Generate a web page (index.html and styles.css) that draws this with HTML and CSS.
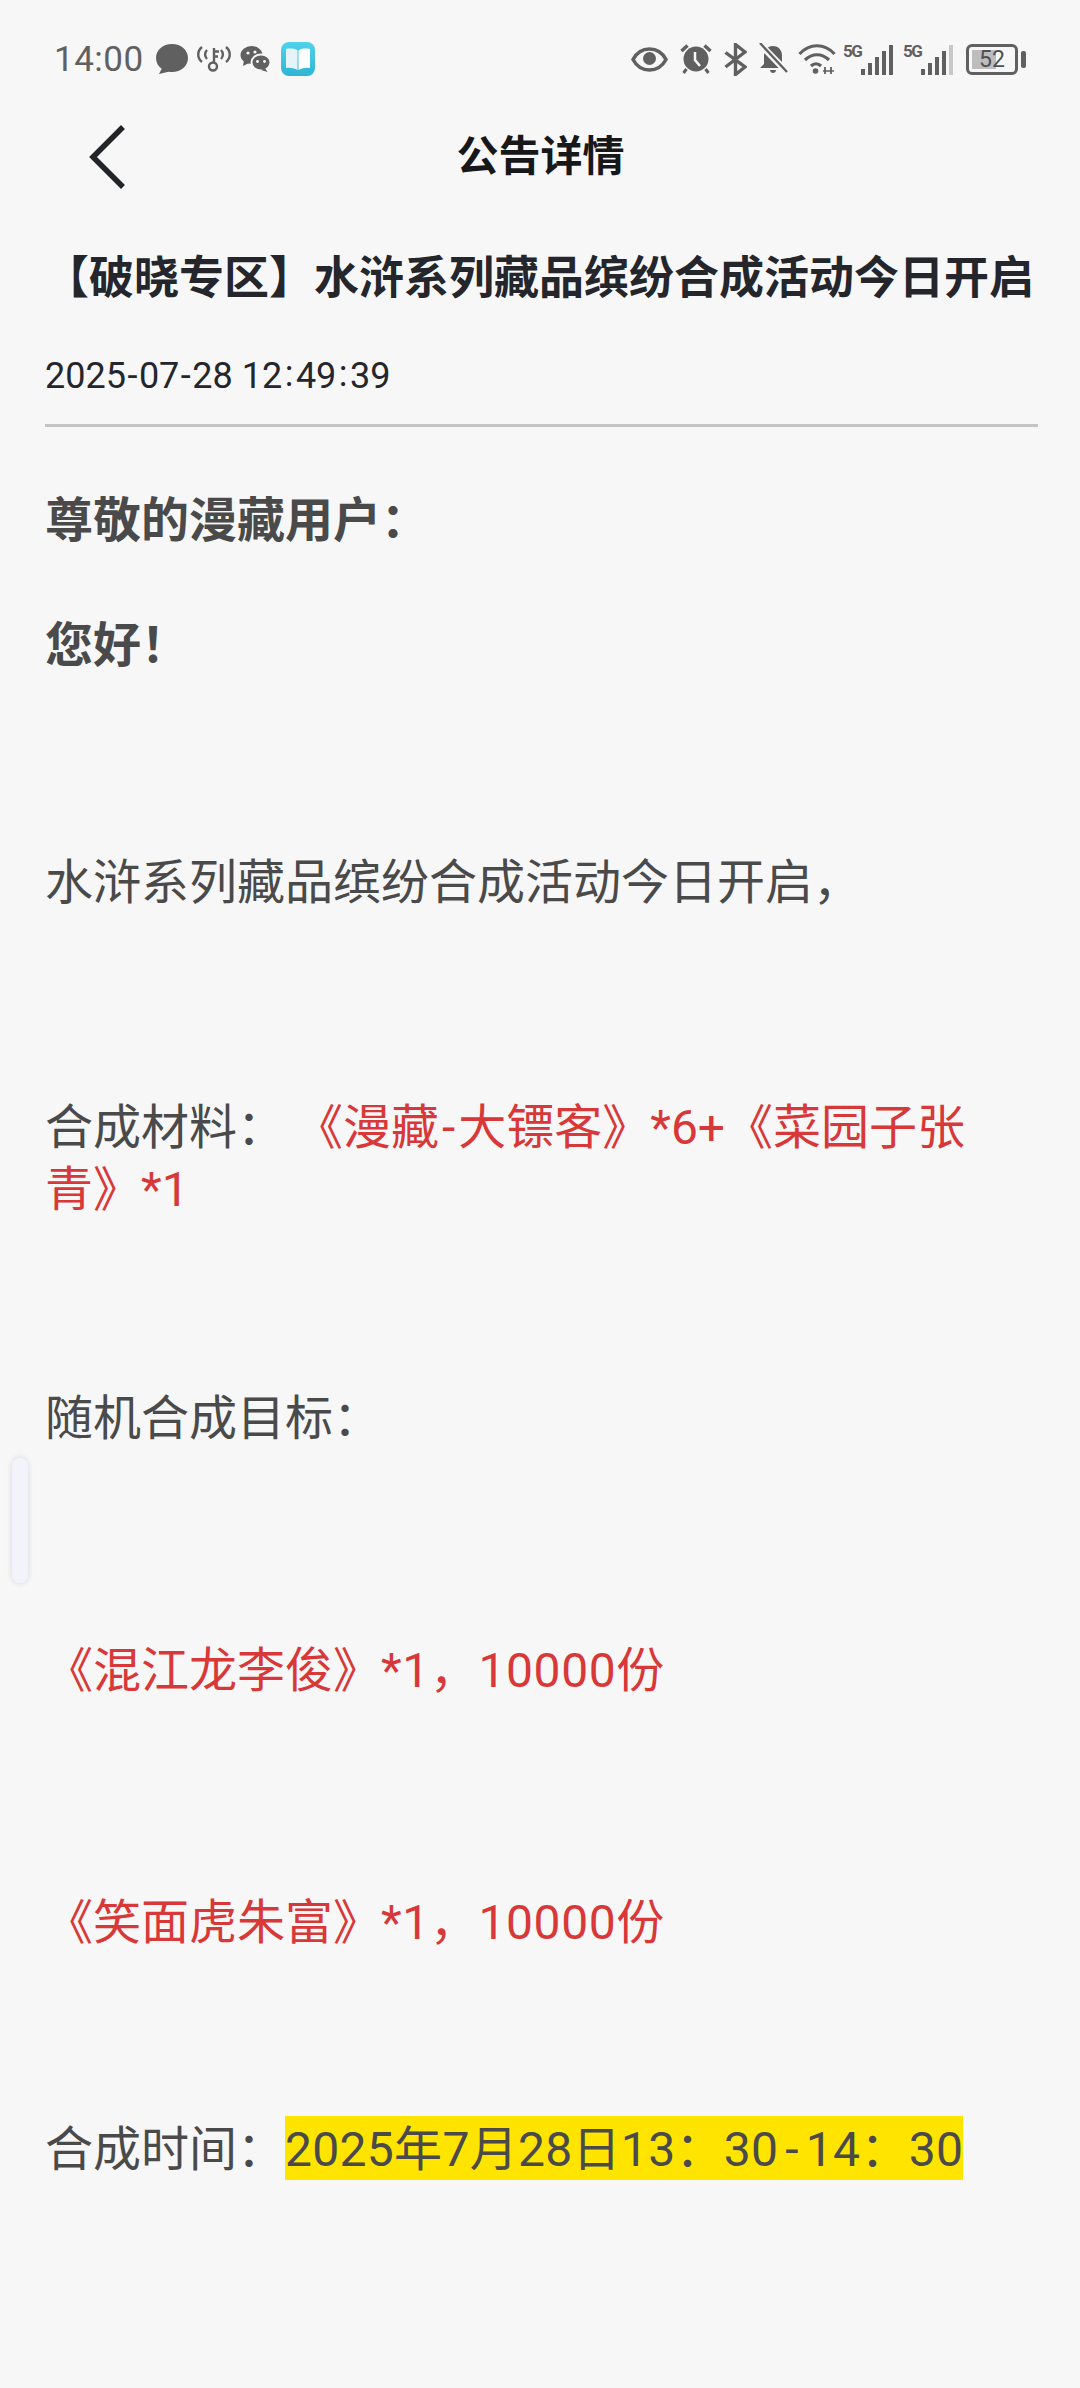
FILE: index.html
```html
<!DOCTYPE html>
<html lang="zh-CN">
<head>
    <meta charset="UTF-8">
    <meta name="viewport" content="width=device-width, initial-scale=1.0">
    <title>公告详情</title>
    <link rel="stylesheet" href="styles.css">
</head>
<body>
    <div class="statusbar">
        <div class="status-left">
            <span class="clock">14:00</span>
            <svg class="ico ml-12" width="32" height="30" viewBox="0 0 32 30"><path d="M16 0C7 0 0 6 0 14c0 4.500 2.200 8.300 5.700 10.800L3 30l9.500-2.300c1.100.2 2.300.3 3.500.3 9 0 16-6 16-14S25 0 16 0z" fill="#606060"/></svg>
            <svg class="ico ml-9" width="34" height="26" viewBox="0 0 34 26" fill="none" stroke="#606060" stroke-width="2.400"><path d="M5 1C0 5 0 12 5 16M10 4c-2.500 2.500-2.500 6.500 0 9M29 1c5 4 5 11 0 15M24 4c2.500 2.500 2.500 6.500 0 9"/><circle cx="16" cy="20.500" r="4"/><path d="M17 16.500V2M17 5.500h5M17 10.500h4"/></svg>
            <svg class="ico ml-9" width="31" height="26" viewBox="0 0 31 26"><ellipse cx="11.500" cy="9" rx="11" ry="9" fill="#606060"/><path d="M4 14l-1 6 6-3z" fill="#606060"/><ellipse cx="21" cy="16.500" rx="9.500" ry="8" fill="#606060" stroke="#f7f7f8" stroke-width="2"/><path d="M25 22l2.500 4-6.500-2z" fill="#606060"/><circle cx="8" cy="7" r="1.600" fill="#f7f7f8"/><circle cx="15" cy="6" r="1.600" fill="#f7f7f8"/><circle cx="17.500" cy="15.500" r="1.400" fill="#f7f7f8"/><circle cx="24.500" cy="15.500" r="1.400" fill="#f7f7f8"/></svg>
            <svg class="ico ml-10" width="34" height="34" viewBox="0 0 34 34"><defs><linearGradient id="bookbg" x1="0" y1="0" x2="0" y2="1"><stop offset="0" stop-color="#4fd3ec"/><stop offset="1" stop-color="#2fb4d6"/></linearGradient></defs><rect width="34" height="34" rx="8" fill="url(#bookbg)"/><path d="M5 7c5-1 9-.5 11.500 1.500V28C13 26 9 25.500 5 26z" fill="#e6f4fa"/><path d="M29 7c-5-1-9-.5-11.500 1.500V28C21 26 25 25.500 29 26z" fill="#ffffff"/></svg>
        </div>
        <div class="status-right">
            <svg class="ico" width="37" height="25" viewBox="0 0 37 25"><path d="M2 12.500C6 5 12 2 18.500 2S31 5 35 12.500C31 20 25 23 18.500 23S6 20 2 12.500z" fill="none" stroke="#606060" stroke-width="3.500"/><circle cx="18.500" cy="11.500" r="6.500" fill="#606060"/></svg>
            <svg class="ico ml-12" width="32" height="30" viewBox="0 0 31 30"><circle cx="15.500" cy="15" r="12.500" fill="#606060"/><path d="M14.500 8v8l5 6" fill="none" stroke="#f7f7f8" stroke-width="2.500"/><path d="M1 7l6-5.500M30 7l-6-5.500" stroke="#606060" stroke-width="3.500" fill="none"/><path d="M6 25l-3 4M25 25l3 4" stroke="#606060" stroke-width="3" fill="none"/></svg>
            <svg class="ico ml-12" width="23" height="33" viewBox="0 0 23 33"><path d="M1.500 9.500L21 24l-9.500 7.500v-30L21 9 1.500 24" fill="none" stroke="#606060" stroke-width="3.400"/></svg>
            <svg class="ico ml-12" width="29" height="32" viewBox="0 0 29 32"><path d="M14 3c6 0 9 4.500 9 10v8l4 4H1l4-4v-8C5 7.500 8 3 14 3zM11 27h6c0 4-6 4-6 0z" fill="#606060"/><path d="M0 0l28 29" stroke="#f7f7f8" stroke-width="6.500"/><path d="M1 0l27 29" stroke="#606060" stroke-width="2.400"/></svg>
            <svg class="ico ml-10" width="38" height="32" viewBox="0 0 38 32" fill="none" stroke="#606060" stroke-width="3.200"><path d="M1.500 11c10-11 25-11 35 0M7 17c7-7 17-7 24 0M13 23c3-3 7-3 10 0"/><circle cx="17.500" cy="28" r="2.800" fill="#606060" stroke="none"/><path d="M27 24v7M33 24v7" stroke-width="1.800"/><path d="M25 28h11" stroke-width="1.500"/></svg>
            <div class="signal ml-7">
                <span class="net">5G</span>
                <div class="bars"><i class="b1"></i><i class="b2"></i><i class="b3"></i><i class="b4"></i><i class="b5"></i></div>
            </div>
            <div class="signal ml-10">
                <span class="net">5G</span>
                <div class="bars"><i class="b1"></i><i class="b2"></i><i class="b3"></i><i class="b4"></i><i class="b5 weak"></i></div>
            </div>
            <div class="battery ml-13">
                <div class="battery-body"><div class="battery-fill"></div><span class="battery-num">52</span></div>
                <div class="battery-cap"></div>
            </div>
        </div>
    </div>

    <div class="navbar">
        <svg class="back" width="40" height="66" viewBox="0 0 40 66"><path d="M35 3L5 33l30 30" fill="none" stroke="#222428" stroke-width="5.500"/></svg>
        <h1 class="nav-title">公告详情</h1>
    </div>

    <div class="head">
        <h2 class="title">【破晓专区】水浒系列藏品缤纷合成活动今日开启</h2>
        <div class="date">2025<span class="hyphen">-</span>07<span class="hyphen">-</span>28 12<span class="colon">:</span>49<span class="colon">:</span>39</div>
    </div>

    <div class="content">
        <p class="bold">尊敬的漫藏用户：</p>
        <p class="bold gap-1">您好！</p>
        <p class="gap-2">水浒系列藏品缤纷合成活动今日开启，</p>
        <p class="gap-3">合成材料： <span class="red pull">《漫藏<span class="dash">-</span>大镖客》*6+《菜园子张</span><br><span class="red">青》*1</span></p>
        <p class="gap-4">随机合成目标：</p>
        <p class="gap-5 red">《混江龙李俊》<span class="num">*1，10000份</span></p>
        <p class="gap-5 red">《笑面虎朱富》<span class="num">*1，10000份</span></p>
        <p class="gap-6">合成时间：<span class="mark">2025年7月28日13：30<span class="dash">-</span>14：30</span></p>
    </div>

    <div class="edge-handle"></div>
</body>
</html>
```

FILE: styles.css
```css
* {
    margin: 0;
    padding: 0;
    box-sizing: border-box;
}

body {
    width: 1080px;
    height: 2388px;
    background: #f7f7f8;
    font-family: "Roboto", "Noto Sans CJK SC", sans-serif;
    color: #4a4a4a;
    overflow: hidden;
    position: relative;
}

/* status bar */
.statusbar {
    height: 118px;
    padding: 0 54px 0 54px;
    display: flex;
    align-items: center;
    justify-content: space-between;
    color: #606060;
}

.status-left,
.status-right {
    display: flex;
    align-items: center;
}

.clock {
    font-size: 35px;
    letter-spacing: 0.500px;
}

.ico {
    display: block;
}

.ml-7 { margin-left: 7px; }
.ml-9 { margin-left: 9px; }
.ml-10 { margin-left: 10px; }
.ml-12 { margin-left: 12px; }
.ml-13 { margin-left: 13px; }

.signal {
    width: 50px;
    height: 31px;
    position: relative;
}

.net {
    position: absolute;
    left: 0;
    top: -3px;
    font-size: 17px;
    line-height: 20px;
    font-weight: 700;
    letter-spacing: -1.500px;
}

.bars {
    position: absolute;
    right: 0;
    bottom: 0;
    display: flex;
    align-items: flex-end;
    gap: 3px;
}

.bars i {
    display: block;
    width: 4px;
    background: #606060;
}

.bars .b1 { height: 6px; }
.bars .b2 { height: 12px; }
.bars .b3 { height: 18px; }
.bars .b4 { height: 24px; }
.bars .b5 { height: 30px; }
.bars .weak { background: #c8c8c8; }

.battery {
    display: flex;
    align-items: center;
    gap: 3px;
}

.battery-body {
    width: 52px;
    height: 31px;
    border: 3px solid #606060;
    border-radius: 6px;
    position: relative;
    padding: 3px;
}

.battery-fill {
    width: 60%;
    height: 100%;
    background: #bdbdbd;
}

.battery-num {
    position: absolute;
    left: 0;
    right: 0;
    top: 0;
    text-align: center;
    font-size: 23px;
    line-height: 25px;
    color: #505050;
}

.battery-cap {
    width: 5px;
    height: 17px;
    background: #606060;
    border-radius: 2px;
}

/* nav */
.navbar {
    height: 78px;
    position: relative;
    display: flex;
    align-items: center;
    justify-content: center;
}

.back {
    position: absolute;
    left: 88px;
    top: 6px;
}

.nav-title {
    font-size: 42px;
    line-height: 78px;
    font-weight: 700;
    color: #17181a;
    margin-left: 1px;
}

/* head */
.head {
    margin: 0 42px 0 45px;
    padding-top: 48px;
    padding-bottom: 26px;
    border-bottom: 3px solid #c4c4c4;
}

.title {
    font-size: 45px;
    line-height: 70px;
    font-weight: 700;
    color: #24262c;
    white-space: nowrap;
    margin-left: -1px;
}

.date {
    font-size: 36px;
    line-height: 44px;
    color: #24262c;
    margin-top: 40px;
}

.hyphen {
    padding: 0 1.500px;
}

.colon {
    padding: 0 2.500px;
    vertical-align: 2px;
    line-height: 0;
}

/* body text */
.content {
    padding: 63px 45px 0;
    font-size: 48px;
    line-height: 62px;
}

.bold {
    font-weight: 700;
}

.gap-1 { margin-top: 63px; }
.gap-2 { margin-top: 175px; }
.gap-3 { margin-top: 183px; }
.gap-4 { margin-top: 167px; }
.gap-5 { margin-top: 190px; }
.gap-6 { margin-top: 165px; }

.red {
    color: #d83838;
}

.pull {
    margin-left: -2px;
}

.dash {
    padding: 0 3px;
}

.num {
    letter-spacing: 0.600px;
}

.mark {
    background: #ffe400;
    color: #4a4a4a;
    padding: 5px 0 2px;
    letter-spacing: 0.300px;
}

.mark .dash {
    padding: 0 7px;
}

/* side handle */
.edge-handle {
    position: absolute;
    left: 12px;
    top: 1458px;
    width: 16px;
    height: 125px;
    border-radius: 8px;
    background: #f3f3fc;
    box-shadow: 0 0 4px 2px #e6e6ea;
}
```
